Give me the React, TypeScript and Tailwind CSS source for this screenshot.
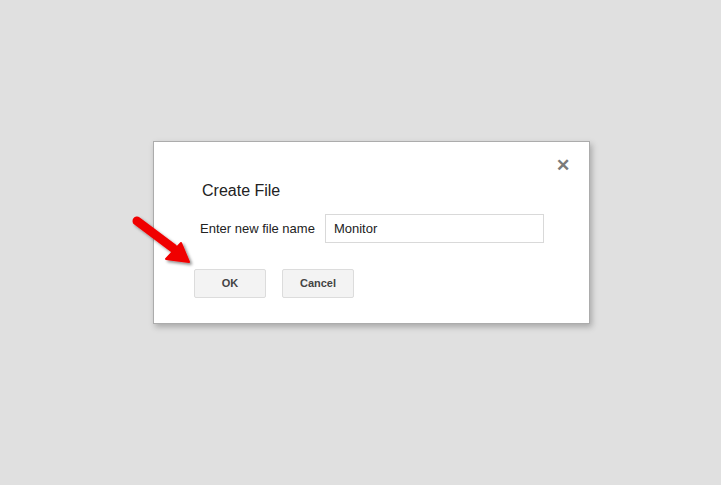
import React from "react";

function RedArrow(): JSX.Element {
    return (
        <svg
            className="absolute left-[124px] top-[208px]"
            width="80"
            height="70"
            viewBox="0 0 80 70"
        >
            <defs>
                <filter id="arrowShadow" x="-20%" y="-20%" width="150%" height="150%">
                    <feDropShadow dx="2" dy="2" stdDeviation="1.5" floodColor="#000" floodOpacity="0.45" />
                </filter>
            </defs>
            <g filter="url(#arrowShadow)">
                <line x1="13" y1="13" x2="49" y2="40" stroke="#f00000" strokeWidth="9" strokeLinecap="round" />
                <polygon points="42,51 57,35 65,54" fill="#f00000" stroke="#f00000" strokeWidth="2" strokeLinejoin="round" />
            </g>
        </svg>
    );
}

function CreateFileDialog(): JSX.Element {
    return (
        <div className="relative w-[437px] h-[183px] bg-white border border-[#acacac] shadow-[2px_3px_6px_rgba(0,0,0,0.25)]">
            <button className="absolute right-[19px] top-[15px] text-[#7a7a7a] text-[17px] font-bold leading-none font-['Liberation_Sans',sans-serif]">
                ✕
            </button>

            <div className="pt-[39px] pl-[48px] pr-[45px]">
                <h2 className="text-[16px] leading-[20px] text-[#222] font-['Liberation_Sans',Arial,sans-serif]">Create File</h2>

                <div className="flex items-center mt-[13px] ml-[-2px]">
                    <span className="text-[13px] text-[#222] font-['Liberation_Sans',Arial,sans-serif]">Enter new file name</span>
                    <input
                        className="ml-[10px] w-[219px] h-[29px] border border-[#d9d9d9] px-[8px] text-[13px] text-[#222] outline-none font-['Liberation_Sans',Arial,sans-serif]"
                        defaultValue="Monitor"
                    />
                </div>

                <div className="flex gap-[16px] mt-[26px] ml-[-8px]">
                    <button className="w-[72px] h-[29px] bg-[#f3f3f3] border border-[#dcdcdc] rounded-[2px] text-[11px] font-bold text-[#444] font-['Liberation_Sans',Arial,sans-serif]">
                        OK
                    </button>
                    <button className="w-[72px] h-[29px] bg-[#f3f3f3] border border-[#dcdcdc] rounded-[2px] text-[11px] font-bold text-[#444] font-['Liberation_Sans',Arial,sans-serif]">
                        Cancel
                    </button>
                </div>
            </div>
        </div>
    );
}

export default function App(): JSX.Element {
    return (
        <div className="relative w-[721px] h-[485px] bg-[#e0e0e0] pt-[141px] pl-[153px]">
            <CreateFileDialog />
            <RedArrow />
        </div>
    );
}
